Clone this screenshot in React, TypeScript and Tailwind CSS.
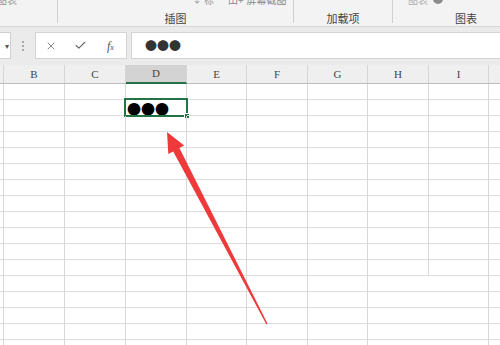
import React from 'react';
import { X, Check } from 'lucide-react';

const COLS = [
  { key: 'A', label: '', w: 'w-[4px]' },
  { key: 'B', label: 'B', w: 'w-[61px]' },
  { key: 'C', label: 'C', w: 'w-[61px]' },
  { key: 'D', label: 'D', w: 'w-[61px]' },
  { key: 'E', label: 'E', w: 'w-[60px]' },
  { key: 'F', label: 'F', w: 'w-[61px]' },
  { key: 'G', label: 'G', w: 'w-[60px]' },
  { key: 'H', label: 'H', w: 'w-[61px]' },
  { key: 'I', label: 'I', w: 'w-[60px]' },
  { key: 'J', label: '', w: 'flex-1' },
];

const ROWS = Array.from({ length: 17 }, (_, i) => i + 1);

const cjk = "font-['Microsoft_YaHei','Noto_Sans_CJK_SC',sans-serif]";

const Ribbon: React.FC = () => (
  <div className={`flex h-[27px] bg-[#f3f3f3] border-b border-[#d6d6d6] text-[#444] ${cjk}`}>
    {/* group 1 */}
    <div className="w-[57px] shrink-0 flex flex-col">
      <div className="h-[8px] overflow-hidden text-[10px] text-[#9a9a9a] leading-none">
        <span className="block -mt-[5px] -ml-[3px]">图表</span>
      </div>
    </div>
    <div className="w-px h-[23px] bg-[#cfcfcf] shrink-0" />
    {/* group 2: 插图 */}
    <div className="w-[235px] shrink-0 flex flex-col items-center">
      <div className="h-[8px] w-full overflow-hidden text-[10px] text-[#a0a0a0] leading-none flex">
        <span className="block -mt-[6px] ml-[134px]">↓</span>
        <span className="block -mt-[5px] ml-[2px]">标</span>
        <span className="block -mt-[5px] ml-[14px] text-[#8a8a8a]">田+</span>
        <span className="block -mt-[5px] ml-[3px] text-[#8a8a8a]">屏幕截图</span>
      </div>
      <span className="text-[11px] leading-none mt-[5px]">插图</span>
    </div>
    <div className="w-px h-[23px] bg-[#cfcfcf] shrink-0" />
    {/* group 3: 加载项 */}
    <div className="w-[98px] shrink-0 flex flex-col items-center">
      <div className="h-[8px]" />
      <span className="text-[11px] leading-none mt-[5px]">加载项</span>
    </div>
    <div className="w-px h-[23px] bg-[#cfcfcf] shrink-0" />
    {/* group 4: 图表 */}
    <div className="w-[146px] shrink-0 flex flex-col items-center">
      <div className="h-[8px] w-full overflow-hidden text-[10px] text-[#b0b0b0] leading-none flex items-start">
        <span className="block -mt-[5px] ml-[15px]">图表</span>
        <span className="block w-[10px] h-[10px] rounded-full bg-[#8c8c8c] -mt-[6px] ml-[5px]" />
      </div>
      <span className="text-[11px] leading-none mt-[5px]">图表</span>
    </div>
  </div>
);

const FormulaBar: React.FC = () => (
  <div className="bg-[#ebebeb] h-[38px] pt-[5px]">
    <div className="flex h-[27px] items-stretch">
      <div className="w-[11px] bg-white border border-l-0 border-[#cfcfcf] flex items-center justify-end pr-[1px]">
        <span className="text-[8px] text-[#555] leading-none">▾</span>
      </div>
      <div className="w-[24px] flex items-center justify-center">
        <span className="flex flex-col gap-[2px]">
          <span className="w-[2px] h-[2px] bg-[#aaa]" />
          <span className="w-[2px] h-[2px] bg-[#aaa]" />
          <span className="w-[2px] h-[2px] bg-[#aaa]" />
        </span>
      </div>
      <div className="w-[92px] bg-white border border-[#d4d4d4] flex items-center">
        <div className="w-[30px] flex justify-center">
          <X size={12} strokeWidth={1.6} className="text-[#666]" />
        </div>
        <div className="w-[30px] flex justify-center">
          <Check size={13} strokeWidth={2} className="text-[#666]" />
        </div>
        <div className="w-[32px] flex justify-center">
          <span className="font-['Liberation_Serif',serif] italic text-[12px] text-[#555] leading-none">
            f<span className="text-[8px]">x</span>
          </span>
        </div>
      </div>
      <div className="flex-1 ml-[4px] bg-white border border-r-0 border-[#d4d4d4] flex items-center pl-[13px]">
        <span className={`text-[12px] leading-none text-[#333] ${cjk}`}>●●●</span>
      </div>
    </div>
  </div>
);

const Grid: React.FC = () => (
  <div className="bg-white">
    <div className="flex h-[19px] bg-[#efefef] border-b border-[#bdbdbd]">
      {COLS.map((c) => (
        <div
          key={c.key}
          className={`${c.w} shrink-0 flex items-center justify-center font-['Liberation_Serif',serif] text-[11px] text-[#444] ${
            c.key === 'D' ? 'bg-[#d3d3d3] border-b-2 border-b-[#217346] -mb-px' : ''
          } ${c.key === 'J' ? '' : 'border-r border-r-[#d5d5d5]'}`}
        >
          {c.label}
        </div>
      ))}
    </div>
    {ROWS.map((r) => (
      <div key={r} className="flex h-[16px]">
        {COLS.map((c) => {
          const noRight = c.key === 'J' || (c.key === 'H' && r > 12);
          const selected = c.key === 'D' && r === 2;
          return (
            <div
              key={c.key}
              className={`${c.w} shrink-0 relative border-b border-b-[#dcdcdc] ${
                noRight ? '' : 'border-r border-r-[#d8d8d8]'
              }`}
            >
              {selected && (
                <>
                  <div className="absolute inset-0 flex items-center pl-[1px]">
                    <span className={`text-[14px] leading-none text-black ${cjk}`}>●●●</span>
                  </div>
                  <div className="absolute -left-[2px] -top-[2px] w-[64px] h-[19px] border-2 border-[#217346]" />
                  <div className="absolute -right-[4px] -bottom-[4px] w-[6px] h-[6px] bg-[#217346] border border-white" />
                </>
              )}
            </div>
          );
        })}
      </div>
    ))}
  </div>
);

const Arrow: React.FC = () => (
  <svg className="absolute inset-0 pointer-events-none" width="500" height="345" viewBox="0 0 500 345">
    <polygon
      points="167,132 184.2,145.6 179.4,148.1 267.6,323.7 266.3,324.3 173.2,151.4 168.3,153.9"
      fill="#ee3a3a"
    />
  </svg>
);

const App: React.FC = () => {
  return (
    <div className="relative w-[500px] h-[345px] overflow-hidden bg-white">
      <Ribbon />
      <FormulaBar />
      <Grid />
      <Arrow />
    </div>
  );
};

export default App;
